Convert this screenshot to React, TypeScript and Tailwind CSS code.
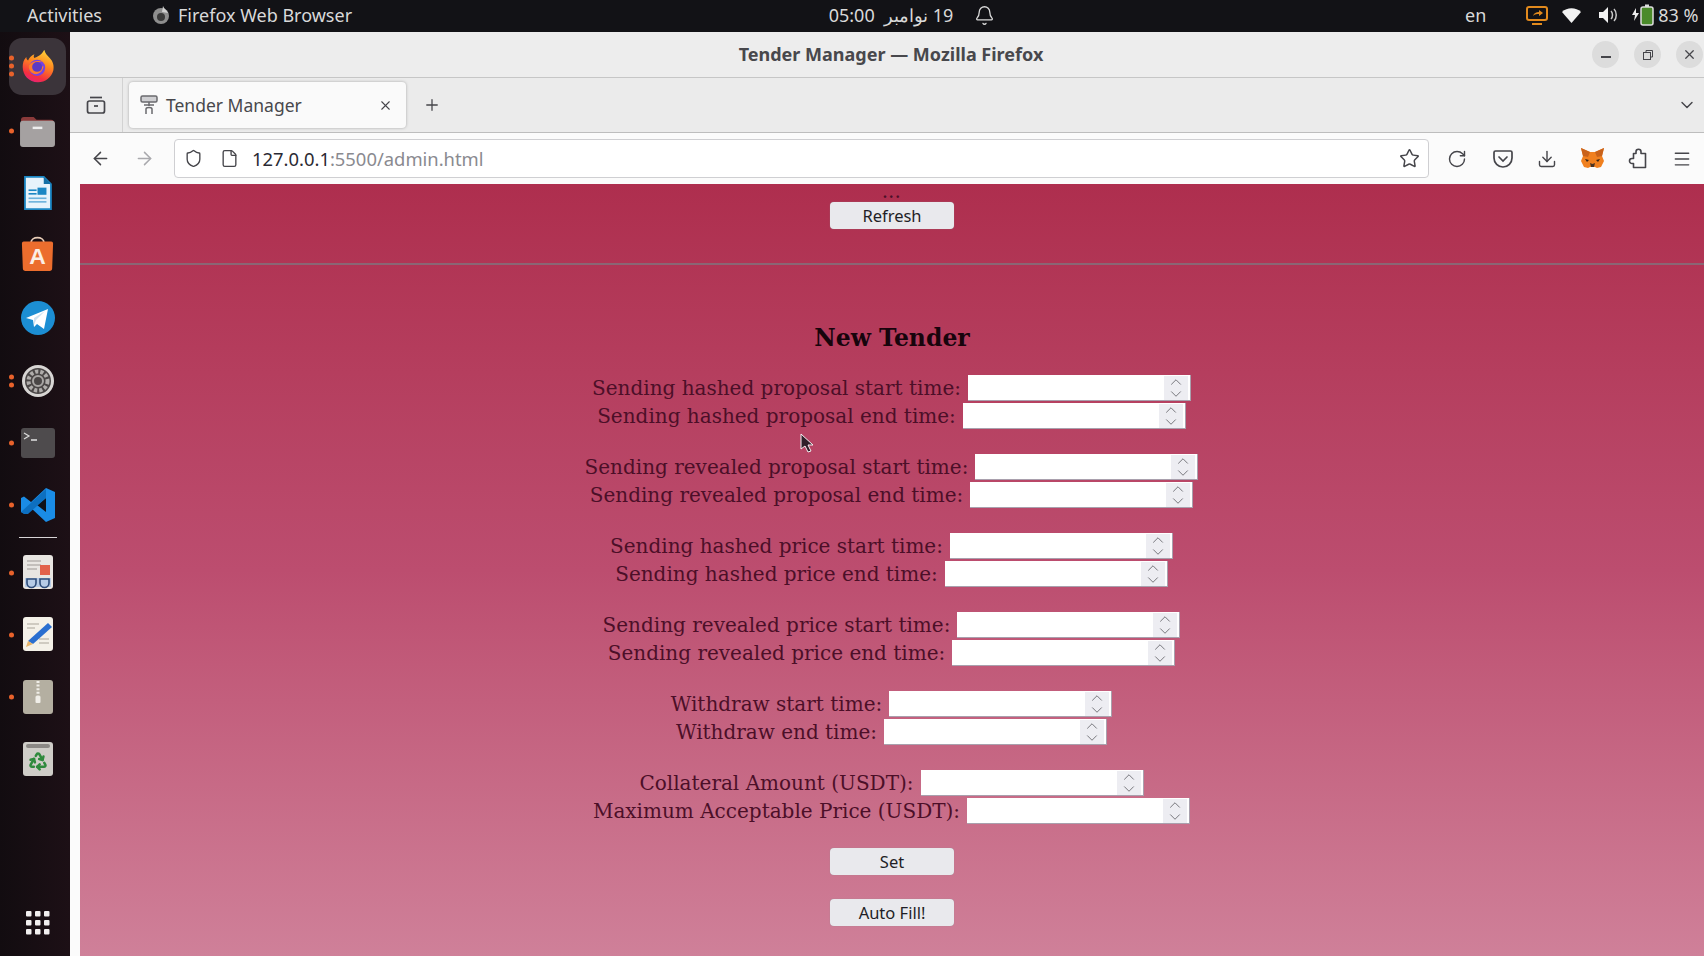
import React from "react";
import { ArrowLeft, ArrowRight, Bell, ChevronDown, ChevronUp, Download, File, Menu, Plus, Recycle, RotateCw, Shield, Star, X } from "lucide-react";

const FirefoxLogo = ({ size = 36 }: { size?: number }) => (
  <svg width={size} height={size} viewBox="0 0 40 40">
    <defs>
      <linearGradient id="ffa" x1="0.7" y1="0" x2="0.3" y2="1">
        <stop offset="0" stopColor="#ffd43a" />
        <stop offset="0.4" stopColor="#ff8a1f" />
        <stop offset="0.8" stopColor="#f5303f" />
        <stop offset="1" stopColor="#e6207a" />
      </linearGradient>
    </defs>
    <path d="M27 2c1 4 3 6 6 9 4 4 5 9 4 14-2 8-9 13-17 13C10 38 3 30 3 21c0-4 1-8 4-11 0 2 1 3 2 4 1-3 4-6 7-7-1 2-1 3 0 4 3-1 8-3 11-9z" fill="url(#ffa)" />
    <circle cx="19" cy="22" r="9" fill="#7542e5" />
    <path d="M10 19c4-5 11-6 16-3-4-1-9 0-10 3 2 3 7 3 10 1 0 5-5 10-10 9-4-1-7-5-6-10z" fill="#ff7a2a" />
    <circle cx="19" cy="21" r="5.5" fill="#5b3bc4" />
  </svg>
);

const FilesIcon = () => (
  <svg width="37" height="33" viewBox="0 0 38 34">
    <path d="M2 5a3 3 0 0 1 3-3h10l3 3h15a3 3 0 0 1 3 3v6H2z" fill="#8a3a3a" />
    <rect x="1" y="6" width="36" height="27" rx="3" fill="#a5a1a1" />
    <rect x="14" y="12" width="10" height="2.5" fill="#eeeeee" />
  </svg>
);

const WriterIcon = () => (
  <svg width="29" height="34" viewBox="0 0 32 38">
    <path d="M2 1h21l8 8v28H2z" fill="#e7f3fb" stroke="#1b87c4" strokeWidth="2" />
    <path d="M23 1l8 8h-8z" fill="#1570a6" />
    <rect x="6" y="15" width="9" height="1.8" fill="#1b87c4" />
    <rect x="6" y="19" width="9" height="1.8" fill="#1b87c4" />
    <rect x="16" y="13" width="10" height="8" fill="#1b87c4" />
    <rect x="6" y="24" width="20" height="1.8" fill="#6cb2dc" />
    <rect x="6" y="28" width="20" height="1.8" fill="#6cb2dc" />
  </svg>
);

const AppStoreIcon = () => (
  <svg width="33" height="35" viewBox="0 0 36 38" className="-mt-[3px]">
    <path d="M11 7c0-7 14-7 14 0" fill="none" stroke="#e8cdb8" strokeWidth="2" />
    <path d="M3 6h30a2 2 0 0 1 2 2l-1 27a3 3 0 0 1-3 3H5a3 3 0 0 1-3-3L1 8a2 2 0 0 1 2-2z" fill="#ec6d2d" />
    <text x="18" y="31" textAnchor="middle" fontFamily="Liberation Sans, sans-serif" fontWeight="700" fontSize="25" fill="#fbeee5">A</text>
  </svg>
);

const TelegramIcon = () => (
  <svg width="34" height="34" viewBox="0 0 34 34">
    <circle cx="17" cy="17" r="17" fill="#1c8ed3" />
    <path d="M5 17 27 8l-4 20-7-5-3 3-1-7z" fill="#ffffff" />
    <path d="m13 17 11-7-9 9-2 5z" fill="#cfe2f0" />
  </svg>
);

const SettingsIcon = () => (
  <svg width="34" height="34" viewBox="0 0 34 34">
    <circle cx="17" cy="17" r="16" fill="#d8d6d4" />
    <circle cx="17" cy="17" r="13" fill="#4a4646" />
    <circle cx="17" cy="17" r="9.5" fill="none" stroke="#b0adab" strokeWidth="4" strokeDasharray="3.2 2" />
    <circle cx="17" cy="17" r="5" fill="none" stroke="#a9a6a4" strokeWidth="2" />
  </svg>
);

const TerminalIcon = () => (
  <svg width="34" height="30" viewBox="0 0 34 30">
    <rect width="34" height="30" rx="3" fill="#4e4b4d" />
    <path d="m3 5 5 3-5 3" fill="none" stroke="#dddddd" strokeWidth="1.2" />
    <path d="M10 12h6" stroke="#eeeeee" strokeWidth="1.4" />
  </svg>
);

const VSCodeIcon = () => (
  <svg width="36" height="36" viewBox="0 0 36 36">
    <path d="M26 1 35 5v26l-9 4-15-14-7 5.5L1 25v-14l3-1.500 7 5.500z" fill="#1a8ce6" />
    <path d="M26 11v14l-9-7z" fill="#0f1017" />
    <path d="m1 25 25-23v9L8 27l-4 0z" fill="#0d6fc0" />
  </svg>
);

const ReaderIcon = () => (
  <svg width="30" height="34" viewBox="0 0 30 34" className="-mt-[2px]">
    <rect width="30" height="34" rx="3" fill="#e9e6e2" />
    <path d="M4 6h14M4 10h14M4 14h10" stroke="#b6b3ae" strokeWidth="1.5" />
    <rect x="17" y="10" width="10" height="10" fill="#e2614a" />
    <rect x="2" y="23" width="26" height="9" fill="#b6cbe6" />
    <path d="M4 24h9v4a3 3 0 0 1-9 0zM17 24h9v4a3 3 0 0 1-9 0z" fill="none" stroke="#2f4d7a" strokeWidth="1.6" />
  </svg>
);

const EditorIcon = () => (
  <svg width="30" height="34" viewBox="0 0 30 34" className="-mt-[2px]">
    <rect width="30" height="34" rx="3" fill="#f4f1e8" />
    <path d="M4 7h12M4 11h8M16 22h10M16 26h10" stroke="#c2bfb4" strokeWidth="1.3" />
    <path d="M25 6 29 10 10 27 5 24z" fill="#2a6fd0" />
    <path d="m5 24 5 3-7 3z" fill="#e6b56c" />
  </svg>
);

const ArchiveIcon = () => (
  <svg width="30" height="34" viewBox="0 0 30 34">
    <rect width="30" height="34" rx="3" fill="#b4afa1" />
    <path d="M15 1v15" stroke="#f0eee8" strokeWidth="3" strokeDasharray="2 1.600" />
    <rect x="12.500" y="16" width="5" height="7" rx="1" fill="#f0eee8" />
  </svg>
);

const TrashIcon = () => (
  <div className="w-[30px] h-[34px] rounded-[3px] bg-[#cfcdc8] flex flex-col items-center">
    <div className="w-[24px] h-[4px] mt-[2px] rounded-sm bg-[#8b8885]" />
    <Recycle size={20} strokeWidth={3} className="mt-[3px] text-[#2f8a3d]" />
  </div>
);

const GridIcon = () => (
  <svg width="26" height="26" viewBox="0 0 26 26" fill="#f1efef">
    {[1, 10, 19].map((y) =>
      [1, 10, 19].map((x) => <rect key={`${x}-${y}`} x={x} y={y} width="5.500" height="5.500" rx="1" />)
    )}
  </svg>
);

const dots = (n: number) => (
  <div className="absolute left-[4px] top-1/2 -translate-y-1/2 flex flex-col gap-[3px]">
    {Array.from({ length: n }).map((_, i) => (
      <span key={i} className="w-[5px] h-[5px] rounded-full bg-[#e9622b]" />
    ))}
  </div>
);

const DockItem = ({ n = 0, h = 62, active = false, children }: { n?: number; h?: number; active?: boolean; children: React.ReactNode }) => (
  <div className="relative w-full flex items-center justify-center shrink-0" style={{ height: h }}>
    {active && <div className="absolute left-[3.5px] right-[4px] top-[4px] bottom-[3px] rounded-[13px] bg-[#3b343a]" />}
    <div className="relative flex items-center justify-center">{children}</div>
    {n > 0 && dots(n)}
  </div>
);

const Dock = () => (
  <aside className="w-[70px] shrink-0 flex flex-col bg-gradient-to-r from-[#120c10] to-[#1d1016] pt-[2px] pl-[5px]">
    <DockItem n={3} active h={64}>
      <FirefoxLogo />
    </DockItem>
    <div className="h-[2px] shrink-0" />
    <DockItem n={1}><FilesIcon /></DockItem>
    <DockItem><WriterIcon /></DockItem>
    <DockItem><AppStoreIcon /></DockItem>
    <DockItem h={64}><TelegramIcon /></DockItem>
    <DockItem n={2}><SettingsIcon /></DockItem>
    <DockItem n={1}><TerminalIcon /></DockItem>
    <DockItem n={1}><VSCodeIcon /></DockItem>
    <div className="w-[38px] h-[1px] bg-[#d8d4d6] ml-[14px] mt-[1px] mb-[4px]" />
    <DockItem n={1} h={62}><ReaderIcon /></DockItem>
    <DockItem n={1}><EditorIcon /></DockItem>
    <DockItem n={1}><ArchiveIcon /></DockItem>
    <DockItem><TrashIcon /></DockItem>
    <div className="mt-auto mb-[20px] flex justify-center">
      <GridIcon />
    </div>
  </aside>
);

const TopBar = () => (
  <header className="h-[32px] shrink-0 flex items-center pb-[2px] bg-[#121216] text-[#d9d9d9] text-[18px] font-['Noto_Sans',sans-serif] whitespace-pre">
    <span className="ml-[27px] w-[123px]">Activities</span>
    <svg width="20" height="20" viewBox="0 0 20 20" className="ml-[1px]">
      <circle cx="10" cy="11" r="8" fill="#8e8e8e" />
      <circle cx="10" cy="12" r="4" fill="#3a3a3a" />
      <path d="M12 1c1 3 4 4 5 7l-6-1z" fill="#d0d0d0" />
    </svg>
    <span className="ml-[7px] w-[650px]">Firefox Web Browser</span>
    <span dir="rtl" className="w-[126px] text-center">19 نوامبر  05:00</span>
    <Bell size={21} strokeWidth={1.5} className="ml-[20px]" />
    <span className="ml-[470px]">en</span>
    <svg width="22" height="20" viewBox="0 0 22 20" className="ml-[40px]" fill="none" stroke="#e28a1d" strokeWidth="2">
      <rect x="1" y="2" width="20" height="13" rx="2" />
      <path d="M6 19h10" />
      <path d="M7 11c1-3 3-4 6-4V5l4 3-4 3V9c-2 0-4 0-6 2z" fill="#e28a1d" stroke="none" />
    </svg>
    <svg width="19" height="15" viewBox="0 0 19 15" className="ml-[14px]"><path d="M0 4c5-5 14-5 19 0l-9.500 11z" fill="#f2f2f2" /></svg>
    <svg width="20" height="18" viewBox="0 0 20 18" className="ml-[17px]">
      <path d="M1 6h4l5-5v16l-5-5H1z" fill="#f2f2f2" />
      <path d="M13 5c2 2 2 6 0 8M16 3c3 3 3 9 0 12" fill="none" stroke="#c8c8c8" strokeWidth="1.500" />
    </svg>
    <svg width="26" height="22" viewBox="0 0 26 22" className="ml-[13px]">
      <path d="M5 4 1 11h3l-1 6 5-8H5z" fill="#ececec" />
      <rect x="10" y="3" width="12" height="18" rx="2" fill="#4a8a2a" stroke="#dddddd" strokeWidth="1.500" />
      <rect x="14" y="0.500" width="4" height="2.500" fill="#dddddd" />
    </svg>
    <span className="ml-[1px]">83 %</span>
  </header>
);

const FirefoxViewIcon = () => (
  <svg width="20" height="20" viewBox="0 0 20 20" fill="none" stroke="#45454a" strokeWidth="1.700">
    <path d="M4 2.500h12" />
    <rect x="1.500" y="6" width="17" height="12" rx="2" />
    <path d="M8 11h4" />
  </svg>
);

const TenderFavicon = () => (
  <svg width="18" height="20" viewBox="0 0 18 20" fill="none" stroke="#6a6a6e" strokeWidth="1.500">
    <rect x="1" y="1" width="16" height="6" rx="1.500" fill="#cfcfd2" />
    <path d="M9 7v4M4 10h10M6 19v-5c0-2 6-2 6 0v5" />
  </svg>
);

const PocketIcon = () => (
  <svg width="20" height="18" viewBox="0 0 20 18" fill="none" stroke="#45454a" strokeWidth="1.700">
    <path d="M2.500 1h15A1.500 1.500 0 0 1 19 2.500V8a9 9 0 0 1-18 0V2.500A1.500 1.500 0 0 1 2.500 1z" />
    <path d="m6 7 4 4 4-4" strokeLinecap="round" />
  </svg>
);

const FoxIcon = () => (
  <svg width="23" height="21" viewBox="0 0 23 21">
    <path d="M0 0 9 4h5l9-4-2 8 2 5-3 6-4 1-2-1H9l-2 1-4-1-3-6 2-5z" fill="#f0801f" />
    <path d="M0 0 9 4 7 9 2 8zM23 0l-9 4 2 5 5-1z" fill="#c9621a" />
    <path d="m9 15 2.500 1 2.500-1-1 4h-3z" fill="#4b3424" />
    <path d="m4 11 4 1-2 2zM19 11l-4 1 2 2z" fill="#33241a" />
  </svg>
);

const PuzzleIcon = () => (
  <svg width="21" height="21" viewBox="0 0 21 21" fill="none" stroke="#45454a" strokeWidth="1.600" strokeLinejoin="round">
    <path d="M9 5.500V3.800a2.500 2.500 0 0 1 5 0v1.700h4.500V19.500H6.500v-4H5a2.500 2.500 0 0 1 0-5h1.500V5.500z" />
  </svg>
);

const Btn = ({ label }: { label: string }) => (
  <button className="w-[124px] h-[27px] shrink-0 rounded-[4px] bg-[#e9e9ed] text-[#1f1e26] text-[16.5px] leading-[25px] font-['Noto_Sans',sans-serif] shadow-[0_0_1px_#8a8a90]">
    {label}
  </button>
);

const Field = ({ label }: { label: string }) => (
  <div className="h-[27.5px] pr-[1px] flex items-center justify-center gap-[7px] text-[20px] text-[#4c0f28] whitespace-nowrap">
    <span>{label}:</span>
    <div className="w-[223px] h-[26px] bg-white border-b border-r border-[#a9a0ad] flex justify-end">
      <div className="w-[24px] h-[24px] mr-[2px] mt-[1px] bg-[#ededf2] flex flex-col items-center justify-center text-[#6b6b70]">
        <ChevronUp size={18} strokeWidth={1.200} className="-my-[3px]" />
        <ChevronDown size={18} strokeWidth={1.200} className="-my-[3px]" />
      </div>
    </div>
  </div>
);

const Group = ({ a, b }: { a: string; b: string }) => (
  <div className="mb-[24px]">
    <Field label={a} />
    <Field label={b} />
  </div>
);

const Page = () => (
  <main className="relative flex-1 min-h-0 overflow-hidden ml-[10px] bg-gradient-to-b from-[#ae2e4e] via-[#bc4d6f] to-[#cf8099] font-['DejaVu_Serif',serif] flex flex-col items-center">
    <div className="h-[18px] shrink-0 leading-[18px] text-[#4c0f28] text-[14px] font-bold tracking-[1.5px]">...</div>
    <Btn label="Refresh" />
    <div className="w-full h-[2px] shrink-0 mt-[34px] bg-[#8a6674]" />
    <h1 className="mt-[58px] h-[30px] shrink-0 leading-[30px] text-[23.5px] font-bold text-[#17040c]">New Tender</h1>
    <div className="mt-[21.5px] w-full">
      <Group a="Sending hashed proposal start time" b="Sending hashed proposal end time" />
      <Group a="Sending revealed proposal start time" b="Sending revealed proposal end time" />
      <Group a="Sending hashed price start time" b="Sending hashed price end time" />
      <Group a="Sending revealed price start time" b="Sending revealed price end time" />
      <Group a="Withdraw start time" b="Withdraw end time" />
      <Group a="Collateral Amount (USDT)" b="Maximum Acceptable Price (USDT)" />
    </div>
    <div className="flex flex-col gap-[24px] -mt-[1px]">
      <Btn label="Set" />
      <Btn label="Auto Fill!" />
    </div>
    <svg width="16" height="20" viewBox="0 0 16 20" className="absolute left-[720px] top-[249px]">
      <path d="M1 1v15l4-3 3 6 3-1-3-6h5z" fill="#30202a" stroke="#f4f0f2" strokeWidth="1" />
    </svg>
  </main>
);

export default function App() {
  return (
    <div className="w-[1704px] h-[956px] overflow-hidden flex flex-col bg-[#121216]">
      <TopBar />
      <div className="flex-1 min-h-0 flex">
        <Dock />
        <div className="flex-1 min-w-0 flex flex-col bg-[#fbfbfb] font-['Noto_Sans',sans-serif]">
          <div className="h-[46px] shrink-0 flex items-center bg-[#ededed] border-b border-[#c6c6c6]">
            <div className="w-[1642px] shrink-0 text-center text-[18px] font-bold text-[#48484c]">Tender Manager — Mozilla Firefox</div>
            <div className="-ml-[120px] flex gap-[15px] text-[#45454a]">
              <span className="w-[27px] h-[27px] rounded-full bg-[#dcdcdc] flex items-center justify-center text-[16px]"><span className="w-[10px] h-[1.5px] mt-[5px] bg-[#45454a]" /></span>
              <span className="w-[27px] h-[27px] rounded-full bg-[#dcdcdc] flex items-center justify-center">
                <svg width="10" height="10" viewBox="0 0 10 10" fill="none" stroke="#45454a"><rect x="0.500" y="2.500" width="7" height="7" /><path d="M3 2.500V.5h6.500V7H7.500" /></svg>
              </span>
              <span className="w-[27px] h-[27px] rounded-full bg-[#dcdcdc] flex items-center justify-center"><X size={15} strokeWidth={2} /></span>
            </div>
          </div>
          <div className="h-[55px] shrink-0 flex items-center bg-[#ebebeb] border-b border-[#bdbdbd] text-[#45454a]">
            <div className="ml-[16px] w-[37px] h-full flex items-center border-r border-[#d2d2d2]"><FirefoxViewIcon /></div>
            <div className="ml-[6px] w-[277px] h-[46px] rounded-[4px] bg-[#fafafa] shadow-[0_0_3px_#a5a5a5] flex items-center pl-[11px]">
              <TenderFavicon />
              <span className="ml-[8px] text-[17.5px] text-[#48484c]">Tender Manager</span>
              <X size={15} strokeWidth={1.700} className="ml-auto mr-[13px]" />
            </div>
            <Plus size={18} strokeWidth={1.700} className="ml-[17px]" />
            <ChevronDown size={20} strokeWidth={1.700} className="ml-[1236px]" />
          </div>
          <div className="h-[51px] shrink-0 flex items-center bg-[#fbfbfb] text-[#45454a]">
            <ArrowLeft size={21} strokeWidth={1.700} className="ml-[20px]" />
            <ArrowRight size={21} strokeWidth={1.700} className="ml-[23px] text-[#a9a9ad]" />
            <div className="ml-[19px] w-[1255px] h-[39px] rounded-[4px] border border-[#cfcfd2] bg-white flex items-center pl-[9px]">
              <Shield size={19} strokeWidth={1.700} />
              <File size={19} strokeWidth={1.700} className="ml-[17px]" />
              <span className="ml-[13px] text-[18.4px] text-[#2b2a33]">127.0.0.1<span className="text-[#8a8a90]">:5500/admin.html</span></span>
              <Star size={21} strokeWidth={1.700} className="ml-auto mr-[8px]" />
            </div>
            <RotateCw size={20} strokeWidth={1.700} className="ml-[18px]" />
            <span className="ml-[26px] flex"><PocketIcon /></span>
            <Download size={20} strokeWidth={1.700} className="ml-[24px]" />
            <span className="ml-[24px] flex"><FoxIcon /></span>
            <span className="ml-[23px] flex"><PuzzleIcon /></span>
            <Menu size={20} strokeWidth={1.700} className="ml-[24px]" />
          </div>
          <Page />
        </div>
      </div>
    </div>
  );
}
